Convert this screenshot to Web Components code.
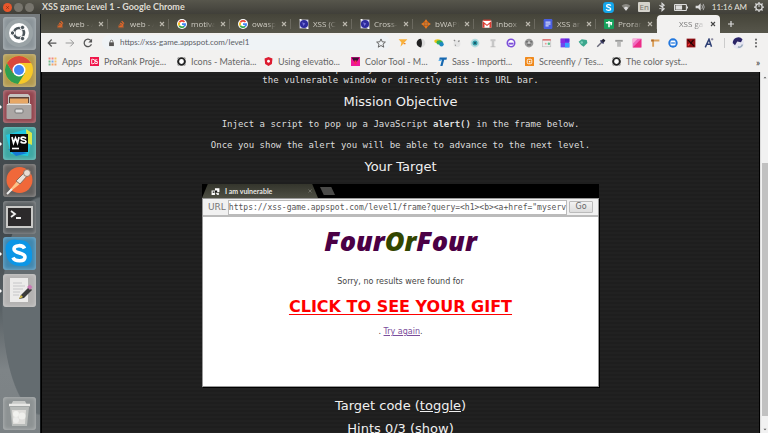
<!DOCTYPE html>
<html lang="en">
<head>
<meta charset="utf-8">
<title>XSS game: Level 1</title>
<style>
html, body { margin: 0; height: 100%; }
body { font-family: "Open Sans", sans-serif; background: #1f1f1f; overflow: hidden; }
</style>
</head>
<body>
<desk-top></desk-top>
<script>
const ICONS = {
  so: '<path d="M4 10v4h8v-4" fill="none" stroke="#8a5a3a" stroke-width="1.6"/><path d="M5 12h6M5.3 9.5l6 .9M6.5 6.5l5.3 2.6M9 3.5l3.800 4" stroke="#e0672a" stroke-width="2"/>',
  google: '<circle cx="8" cy="8" r="8" fill="#fff"/><g fill="none" stroke-width="2.800"><path d="M12 4.800A5 5 0 0 0 3.800 5.500" stroke="#ea4335"/><path d="M3.700 5.500a5 5 0 0 0 0 5" stroke="#fbbc05"/><path d="M3.700 10.500a5 5 0 0 0 7.800 1.300" stroke="#34a853"/><path d="M8 8h5a5 5 0 0 1-1.600 3.900" stroke="#4285f4"/></g>',
  owasp: '<rect x="1" y="1" width="14" height="14" fill="#dcdcf5"/><circle cx="8" cy="8" r="6.500" fill="#2d2a9c"/><path d="M5 5l5 2-3 4z" fill="#7773d8"/><path d="M1 1h3M12 15h3" stroke="#fff" stroke-width="2"/>',
  bug: '<path d="M8 1l7 7-7 7-7-7z" fill="#d9660f"/><circle cx="8" cy="8" r="3" fill="#5a4a3a"/><path d="M1 8h14M8 1v14" stroke="#f08a35" stroke-width="1.500"/>',
  mail: '<rect x="1" y="2" width="14" height="12" rx="1" fill="#fff"/><path d="M1 14V3l7 6 7-6v11h-3V8l-4 3-4-3v6z" fill="#dc3b30"/><path d="M2 2h12" stroke="#dc3b30" stroke-width="2"/>',
  doc: '<rect x="1" y="0" width="14" height="16" rx="2" fill="#4a5fe0"/><path d="M4 5h8M4 8h8M4 11h5" stroke="#fff" stroke-width="1.500"/>',
  sheet: '<rect x="0" y="0" width="16" height="16" rx="2" fill="#16a05c"/><path d="M3 6h10M8 3v10M11.500 6v4" stroke="#fff" stroke-width="2.400"/>',
  x: '<path d="M4 4l8 8M12 4l-8 8" stroke="currentColor" stroke-width="2.200"/>',
  plus: '<path d="M8 2v12M2 8h12" stroke="#ddd" stroke-width="2.400"/>',
  back: '<path d="M15 8H2.500M7.500 2.500L2 8l5.500 5.500" fill="none" stroke="#555" stroke-width="2"/>',
  fwd: '<path d="M1 8h12.500M8.500 2.500L14 8l-5.500 5.500" fill="none" stroke="#999" stroke-width="1.600"/>',
  reload: '<path d="M13.500 10A6 6 0 1 1 12.500 4" fill="none" stroke="#555" stroke-width="2"/><path d="M14.500 1v6h-6z" fill="#555"/>',
  lock: '<rect x="2.500" y="6.500" width="11" height="8.500" fill="#555"/><path d="M5 7V4.500a3 3 0 0 1 6 0V7" fill="none" stroke="#555" stroke-width="1.800"/>',
  star: '<path d="M8 1.500l2 4.600 5 .4-3.800 3.300 1.200 4.900L8 12l-4.400 2.700 1.200-4.900L1 6.500l5-.4z" fill="none" stroke="#555" stroke-width="1.400"/>',
  e1: '<path d="M1 2h14L4 14l1.500-7z" fill="#f9b13a"/><path d="M9 9h3" stroke="#f08020" stroke-width="2"/>',
  e2: '<circle cx="8" cy="8" r="7" fill="#ddd"/><path d="M8 1a7 7 0 0 0 0 14c2-4 2-10 0-14z" fill="#222"/>',
  e3: '<ellipse cx="6" cy="5" rx="5.500" ry="3" fill="#e8c414"/><ellipse cx="9" cy="7" rx="5" ry="3.500" fill="#2fb05a"/><circle cx="12" cy="10" r="3.500" fill="#1e88c0"/>',
  e4: '<circle cx="8" cy="9" r="5.500" fill="#e4e4e4"/><path d="M3 3l2 2M12 4l-2 2M5 12l1-1" stroke="#888" stroke-width="2"/>',
  e5: '<circle cx="8" cy="8" r="7" fill="#b5dcdf"/><circle cx="8" cy="8" r="4" fill="#2c98a5"/><circle cx="8" cy="8" r="1.500" fill="#145"/>',
  e6: '<path d="M4 2h8v3H4zM6 5h4v9H6z" fill="#c8c8c8"/><path d="M4 14h8" stroke="#aaa"/>',
  e7: '<circle cx="8" cy="8" r="6" fill="#fff" stroke="#7c4fd8" stroke-width="2.400"/><path d="M4 9h8" stroke="#7c4fd8" stroke-width="3"/>',
  e8: '<circle cx="8" cy="8" r="7" fill="#999"/><path d="M3 6h10M5 11h6" stroke="#666" stroke-width="2"/><circle cx="8" cy="7" r="2" fill="#ccc"/>',
  e9: '<rect x="1" y="3" width="13" height="11" fill="#eee" stroke="#bbb"/><path d="M1 3h13" stroke="#e05a5a" stroke-width="2"/><circle cx="11" cy="9" r="2" fill="#5abf8a"/><circle cx="6" cy="9" r="1.500" fill="#e99"/>',
  e10: '<rect x="1" y="1" width="14" height="14" fill="#6b49f0"/><path d="M1 1h7v7H1z" fill="#8a2be2"/><path d="M8 8h7v7H8z" fill="#36a3ff"/><path d="M8 1h7v5H8z" fill="#5b2be0"/>',
  e11: '<path d="M1 6l5-4 8 1 1 5-6 6-4-3z" fill="#3ba78d"/><circle cx="6" cy="7" r="2" fill="#7fd0bc"/>',
  e12: '<path d="M2 14L10 6" stroke="#667" stroke-width="2.400"/><path d="M8 4l4-3 3 3-3 4z" fill="#223"/><path d="M7 4l5 5" stroke="#336" stroke-width="2"/>',
  e13: '<path d="M2 3h12v3H2z" fill="#999"/><path d="M5 6h6v8H5z" fill="#bbb"/>',
  e14: '<rect x="1" y="1" width="14" height="14" fill="#f06ac0"/><path d="M15 1v14H1z" fill="#ec2d86"/><path d="M1 1h8L1 9z" fill="#f9b0d8"/>',
  e15: '<path d="M2 4h13M5 3v11" stroke="#dba05a" stroke-width="3"/><path d="M2 4h4" stroke="#b06a2a" stroke-width="3"/>',
  e16: '<circle cx="8" cy="8" r="7.500" fill="#2277dd"/><rect x="4" y="4" width="8" height="8" rx="2" fill="#fff"/><path d="M5 8h6" stroke="#2277dd" stroke-width="2"/>',
  e17: '<rect x="1" y="1" width="14" height="14" fill="#8e0d12"/><path d="M3 3l10 10M12 3l-5 6" stroke="#210404" stroke-width="2"/><path d="M3 12l3-3" stroke="#f33" stroke-width="2"/>',
  e18: '<path d="M2 15L8 2l4 12M4 10h7" fill="none" stroke="#2d3f74" stroke-width="2.400"/><path d="M11 2h4M13 0v4" stroke="#557"/>',
  avatar: '<circle cx="8" cy="8" r="8" fill="#e6e6f2"/><path d="M1 8a7.500 7.500 0 0 1 13-5l-2 4-5-1-3 5z" fill="#2a2466"/><path d="M8 13q4 2 6-3" fill="none" stroke="#9ab" stroke-width="2"/>',
  dots: '<circle cx="8" cy="2.500" r="1.700" fill="#666"/><circle cx="8" cy="8" r="1.700" fill="#666"/><circle cx="8" cy="13.500" r="1.700" fill="#666"/>',
  apps: '<g><path d="M1 1h3.500v3.500H1zM6.300 1h3.500v3.500H6.300z" fill="#f08a80"/><path d="M11.500 1H15v3.500h-3.500zM11.500 6.300H15v3.500h-3.500z" fill="#f5c26a"/><path d="M1 6.300h3.500v3.500H1zM1 11.500h3.500V15H1z" fill="#76b98a"/><path d="M6.300 6.300h3.500v3.500H6.300z" fill="#7aa7e8"/><path d="M6.300 11.500h3.500V15H6.300zM11.500 11.500H15V15h-3.500z" fill="#f0a46a"/></g>',
  pro: '<rect width="16" height="16" fill="#f0164a"/><path d="M3 4v8h2a4 4 0 0 0 0-8zM13 5H9.500v3H13v3.500H9" fill="none" stroke="#fff" stroke-width="1.600"/>',
  ring: '<circle cx="8" cy="8" r="6" fill="#fff" stroke="#222" stroke-width="3.500"/><path d="M0 3l4-3M12 0l4 3M0 13l4 3M16 13l-4 3" stroke="#999" stroke-width="1.500"/>',
  ang: '<path d="M8 0l7 2.500-1 10L8 16l-6-3.500-1-10z" fill="#dd1b2f"/><circle cx="8" cy="7.500" r="2.500" fill="#fff"/>',
  color: '<rect width="16" height="16" fill="#f0189a"/><path d="M1 1h14L10 9H6z" fill="#3a1030"/><path d="M6 6h4v7H6z" fill="#f52a55"/>',
  tee: '<path d="M3 1h13l-1 4h-4L8 16H4L7 5H2z" fill="#1668b0"/><path d="M1 6h5" stroke="#58b0f0" stroke-width="2"/>',
  screen: '<rect width="16" height="16" rx="1" fill="#f08a1d"/><rect x="4" y="4" width="8" height="8" rx="2" fill="none" stroke="#fff" stroke-width="1.600"/><rect x="7" y="7" width="2.500" height="2.500" fill="#fff"/>',
  skype: '<path d="M5 0h6a5 5 0 0 1 5 5v6a5 5 0 0 1-5 5H5a5 5 0 0 1-5-5V5a5 5 0 0 1 5-5z" fill="#14a5ea"/><path d="M11.300 5.200C10 3.300 5.200 3.400 5.200 5.700c0 2.500 6 1.700 6 4.300 0 2.700-5.400 2.700-6.600.5" fill="none" stroke="#fff" stroke-width="2"/>',
  wifi: '<path d="M1 6a10 10 0 0 1 14 0L8 14z" fill="#8b8a84"/><path d="M4.500 9.500a5 5 0 0 1 7 0L8 14z" fill="#ddd"/>',
  bt: '<path d="M4 5l7.500 6L8 14V2l3.500 3L4 11" fill="none" stroke="#ddd" stroke-width="1.700"/>',
  battery: '<rect x="1" y="2.500" width="22" height="11" rx="1" fill="none" stroke="#ddd" stroke-width="2"/><rect x="3" y="4" width="12" height="8" fill="#ddd"/><path d="M25 6v4" stroke="#ddd" stroke-width="2"/>',
  sound: '<path d="M1 6h4l4-4v12l-4-4H1z" fill="#ddd"/><path d="M11 5q2 3 0 6M13 3q3.500 5 0 10" fill="none" stroke="#bbb" stroke-width="1.400"/>',
  gear: '<circle cx="8" cy="8" r="5" fill="none" stroke="#ddd" stroke-width="2"/><path d="M8 0v3M8 13v3M0 8h3M13 8h3M2.300 2.300l2 2M11.700 11.700l2 2M2.300 13.700l2-2M11.700 4.300l2-2" stroke="#ddd" stroke-width="2"/><path d="M8 4v4" stroke="#ddd" stroke-width="1.500"/>',
  up: '<path d="M2 11l6-6 6 6z" fill="#555"/>',
  down: '<path d="M2 5l6 6 6-6z" fill="#555"/>',
  fav: '<path d="M1 6h6v8H1zM7 2h8v7H7z" fill="#fff"/><path d="M3 8h3v2H3zM7 6h4v4H7z" fill="#111"/><path d="M8 10h6v4h-3z" fill="#eee"/>'
};
const APPS = {
  Dash: ['#8b9499', '<circle cx="16" cy="16" r="14" fill="#aab1b4" opacity=".5"/><circle cx="16" cy="16" r="10" fill="#fff"/><circle cx="16" cy="16" r="5" fill="none" stroke="#4c565c" stroke-width="2.600"/><g fill="#4c565c" stroke="#fff"><circle cx="9.500" cy="16" r="2.200"/><circle cx="19.500" cy="10.500" r="2.200"/><circle cx="19.500" cy="21.500" r="2.200"/></g>'],
  Chrome: ['#b39a4e', '<circle cx="16" cy="16" r="14" fill="#f7c928"/><path d="M3.900 9A14 14 0 0 1 28.100 9H16z" fill="#d9483b"/><path d="M3.900 9A14 14 0 0 0 15 30l7-11H10z" fill="#2f9e51"/><path d="M3.900 9h12v7l-6 3z" fill="#d9483b"/><circle cx="16" cy="16" r="6.500" fill="#fff"/><circle cx="16" cy="16" r="5" fill="#4285f4"/>'],
  Files: ['#93464f', '<path d="M5 6l2-2h18l2 2v22H5z" fill="#c6c2bf"/><path d="M6 7h20v6H6z" fill="#5d4338"/><path d="M7 8.500h18v5H7z" fill="#e7a765"/><rect x="3.500" y="14" width="25" height="15" rx="1" fill="#aaa6a4"/><path d="M4 14.500h24" stroke="#e4e1df"/><rect x="12" y="19" width="8" height="4" rx="1" fill="#ddd" stroke="#777"/>'],
  WebStorm: ['#3fa8a4', '<path d="M3 8L24 2l5 10-4 17-17-2z" fill="#20c8e0"/><path d="M23 2l6 4v12l-5-2z" fill="#d8e64a"/><path d="M5 22l8 7 12-3z" fill="#1478d4"/><rect x="7" y="7" width="18" height="18" fill="#0a0a0a"/><path d="M9 10l1.500 6 2-5 2 5L16 10M23 11.500c-1.500-2-5-1.500-5 0 0 2 5 1 5 3s-4 2-5.500 0" fill="none" stroke="#fff" stroke-width="1.700"/><path d="M9 21.500h7" stroke="#fff" stroke-width="1.600"/>'],
  Postman: ['#62605f', '<circle cx="16.500" cy="16" r="13" fill="#f0683a"/><path d="M6 27l9-11 3 3-10 8z" fill="#fbc48a"/><path d="M13 17l9-9 3 3-8 9z" fill="#e9e2da" stroke="#8d6b58"/><circle cx="24" cy="9" r="3.500" fill="#e8ddd3" stroke="#8d7162"/><path d="M4 30l5-5" stroke="#eee" stroke-width="2"/>'],
  Terminal: ['#5b6063', '<rect x="3" y="5" width="27" height="22" fill="#c9c9c7"/><rect x="5" y="7" width="23" height="18" fill="#2c2a2b"/><path d="M8 10l4 3-4 3M13 17h5" fill="none" stroke="#eee" stroke-width="1.800"/>'],
  Skype: ['#4188b0', '<path d="M8 3q4-1 6 0 14-1 15 13 0 2 0 6-2 8-10 7Q4 30 3 15 1 7 8 3z" fill="#0c96e6"/><path d="M21.500 11.500C20 7.500 11 7.800 11 12c0 5 11 3 11 8 0 5-10 5-12 .5" fill="none" stroke="#fff" stroke-width="3.600"/>'],
  Editor: ['#b3b2b1', '<path d="M7 4h18v24H7z" fill="#ecebea"/><path d="M10 9h9M10 12h12M10 15h10M10 18h7M10 21h6" stroke="#c6c6c8"/><path d="M16 25l2-4 8-8 3 3-8 8z" fill="#3b3b3b"/><path d="M24 13l3-2.500 2.500 2.500-2.500 3z" fill="#c97ab3"/><path d="M16 25l2-4 2 2z" fill="#d8c04a"/>'],
  Trash: ['#8d9293', '<path d="M7 10h19l-2 19H9z" fill="#b8bbb9"/><path d="M9 13h14l-1 14H10z" fill="#deddda"/><circle cx="13" cy="17" r="3" fill="#f2f2ef"/><circle cx="19" cy="19" r="3.500" fill="#efefec"/><circle cx="13" cy="23" r="3" fill="#ececea"/><path d="M10 4h12l2 4H8z" fill="#c7c9c7"/><path d="M6 8h21" stroke="#e8e8e6" stroke-width="2.500"/>']
};
function define(tag, css, html) {
  customElements.define(tag, class extends HTMLElement {
    constructor() {
      super();
      const t = document.createElement('template');
      t.innerHTML = '<style>*{box-sizing:border-box}button{font:inherit;color:inherit;border:0;background:none;padding:0;margin:0}a{color:inherit;text-decoration:none}' + css + '</style>' + (typeof html === 'function' ? html(this) : html);
      this.attachShadow({ mode: 'open' }).append(t.content.cloneNode(true));
    }
  });
}
const attr = (el, n, d = '') => el.getAttribute(n) ?? d;

define('ui-icon', ':host{display:block;flex:none;width:var(--w,9px);height:var(--s,9px)}svg{display:block;width:100%;height:100%}',
  el => `<svg viewBox="0 0 ${attr(el, 'name') === 'battery' ? 26 : 16} 16" aria-hidden="true">${ICONS[attr(el, 'name')]}</svg>`);

define('system-bar', `
  :host{display:flex;align-items:center;height:14px;flex:none;padding:0 4px 0 3px;background:linear-gradient(#57564c,#403f39);color:#dfdbd2;font:700 9px/14px Lato,sans-serif}
  .win{display:flex;gap:2px;margin-right:8px}
  .win button{width:9px;height:9px;border-radius:50%;background:#77756d;color:#45443f}
  .win button:first-child{background:#e9572b;color:#7c2a12}
  .win ui-icon{--w:5px;--s:5px;margin:2px}
  h1{font:inherit;margin:0;flex:1;white-space:nowrap}
  .tray{display:flex;align-items:center;gap:7px;font:8px/14px Lato,sans-serif;color:#e6e4de}
  .tray ui-icon{--w:10px;--s:10px}
  .lang{font:8px/10px "Open Sans",sans-serif;background:#d5d3cc;color:#77746b;padding:0 1px;border-radius:1px}
  .tray .bat{--w:14px;--s:9px}.tray .sk{--w:11px;--s:11px}`,
  `<div class="win"><button aria-label="Close"><ui-icon name="x"></ui-icon></button><button aria-label="Minimize"></button><button aria-label="Maximize"></button></div>
  <h1>XSS game: Level 1 - Google Chrome</h1>
  <div class="tray"><ui-icon class="sk" name="skype"></ui-icon><ui-icon name="wifi"></ui-icon><span class="lang">En</span><ui-icon name="bt"></ui-icon><ui-icon class="bat" name="battery"></ui-icon><ui-icon name="sound"></ui-icon><time>11:16 AM</time><ui-icon name="gear"></ui-icon></div>`);

define('launch-item', `
  :host{display:block;position:relative}
  button{display:block;width:33px;height:33px;border-radius:3px;background:var(--bg);box-shadow:inset 0 0 4px rgba(255,255,255,.4)}
  svg{display:block;width:33px;height:33px}
  :host([open])::before{content:"";position:absolute;left:-3px;top:15px;border:2px solid transparent;border-left-color:#fff}`,
  el => { const a = APPS[attr(el, 'app')]; return `<button style="--bg:${a[0]}" aria-label="${attr(el, 'app')}"><svg viewBox="0 0 33 33">${a[1]}</svg></button>`; });

define('app-launcher', `
  :host{display:flex;flex-direction:column;justify-content:space-between;width:41px;flex:none;padding:3px;border-right:1px solid #15181a;
  background:radial-gradient(ellipse 40px 110px at 42px 292px,#646c70 98%,transparent),linear-gradient(#777c7f,#464d51 25%,#3f464a 50%,#596165 70%,#7e8487 85%,#7b8184)}
  nav{display:flex;flex-direction:column;justify-content:space-between;height:290px}`,
  `<nav aria-label="Applications"><launch-item app="Dash"></launch-item><launch-item app="Chrome" open></launch-item><launch-item app="Files" open></launch-item><launch-item app="WebStorm" open></launch-item><launch-item app="Postman"></launch-item><launch-item app="Terminal"></launch-item><launch-item app="Skype" open></launch-item><launch-item app="Editor" open></launch-item></nav><launch-item app="Trash"></launch-item>`);

define('browser-tab', `
  :host{display:flex;align-items:center;width:61px;height:18px;padding:0 3px 0 8px;color:#cfccc3;position:relative;flex:none}
  :host(:not([active]))::after{content:"";position:absolute;right:0;top:4px;height:10px;width:1px;background:#6b695f}
  :host([active]){background:#f2f1f0;color:#777;border-radius:4px 4px 0 0;width:63px}
  .t{flex:1;text-align:left;margin-left:4px;overflow:hidden;white-space:nowrap;width:24px;font-size:8px;line-height:18px;-webkit-mask:linear-gradient(90deg,#000 60%,transparent)}
  .c{display:block;margin-left:4px;color:#bbb8ae}
  :host([active]) .c{color:#444}
  .c ui-icon{--w:8px;--s:8px}
  .i{width:10px}.i ui-icon{--w:10px;--s:10px}`,
  el => `<span class="i">${attr(el, 'icon') ? `<ui-icon name="${attr(el, 'icon')}"></ui-icon>` : ''}</span><button class="t" role="tab"><slot></slot></button><button class="c" aria-label="Close tab"><ui-icon name="x"></ui-icon></button>`);

define('tab-strip', `
  :host{display:flex;align-items:center;height:19px;flex:none;padding:1px 0 0 6px;background:linear-gradient(#454439,#57564b);overflow:hidden}
  .new{margin-left:7px}.new ui-icon{--w:8px;--s:8px}`,
  `<browser-tab icon="so">web - A</browser-tab><browser-tab icon="so">web - A</browser-tab><browser-tab icon="google">motiva</browser-tab><browser-tab icon="google">owasp</browser-tab><browser-tab icon="owasp">XSS (C</browser-tab><browser-tab icon="owasp">Cross-</browser-tab><browser-tab icon="bug">bWAPP</browser-tab><browser-tab icon="mail">Inbox</browser-tab><browser-tab icon="doc">XSS ar</browser-tab><browser-tab icon="sheet">Prorar</browser-tab><browser-tab active>XSS ga</browser-tab><button class="new" aria-label="New tab"><ui-icon name="plus"></ui-icon></button>`);

const exts = Array.from({ length: 18 }, (_, i) => `<button aria-label="Extension ${i + 1}"><ui-icon name="e${i + 1}"></ui-icon></button>`).join('');
define('tool-bar', `
  :host{display:flex;align-items:center;height:19px;flex:none;background:#f2f1f0;padding:0 3px 0 2px}
  button{width:18px;height:18px;flex:none;display:grid;place-items:center}
  ui-icon{--w:10px;--s:10px}
  .field{display:flex;align-items:center;flex:1;min-width:0;height:15px;margin:0 4px 0 5px;border-radius:8px;background:#eff3f6;padding-left:6px}
  .field>ui-icon{--w:7px;--s:8px}
  input{flex:1;min-width:0;border:0;margin:0 0 0 5px;padding:0;background:none;outline:0;font:8px/15px Lato,sans-serif;color:#5b6066}
  .sep{width:1px;height:10px;background:#ccc;margin:0 4px 0 6px}
  .av ui-icon{--w:12px;--s:12px}`,
  `<button aria-label="Back"><ui-icon name="back"></ui-icon></button><button aria-label="Forward"><ui-icon name="fwd"></ui-icon></button><button aria-label="Reload"><ui-icon name="reload"></ui-icon></button>
  <div class="field"><ui-icon name="lock"></ui-icon><input aria-label="Address" value="https://xss-game.appspot.com/level1"><button aria-label="Bookmark this page"><ui-icon name="star"></ui-icon></button></div>
  ${exts}<span class="sep"></span><button class="av" aria-label="Profile"><ui-icon name="avatar"></ui-icon></button><button aria-label="Menu"><ui-icon name="dots"></ui-icon></button>`);

define('book-mark', `
  :host{display:block;width:87px;flex:none}
  :host([short]){width:42px}
  a{display:flex;align-items:center;gap:5px;white-space:nowrap;font:9px/19px Lato,sans-serif;color:#666}`,
  el => `<a href="#"><ui-icon name="${attr(el, 'icon')}"></ui-icon><span><slot></slot></span></a>`);

define('bookmark-bar', `
  :host{display:flex;height:20px;flex:none;background:#f2f1f0;padding:0 8px 0 7px;color:#555;overflow:hidden}
  button{margin-left:auto;font:700 9px/17px Lato,sans-serif}`,
  `<book-mark short icon="apps">Apps</book-mark><book-mark icon="pro">ProRank Proje...</book-mark><book-mark icon="ring">Icons - Materia...</book-mark><book-mark icon="ang">Using elevatio...</book-mark><book-mark icon="color">Color Tool - M...</book-mark><book-mark icon="tee">Sass - Importi...</book-mark><book-mark icon="screen">Screenfly / Tes...</book-mark><book-mark icon="ring">The color syst...</book-mark><button aria-label="More bookmarks">»</button>`);

define('target-frame', `
  :host{display:block;width:397px;max-width:100%;margin:0 auto;color:#444;text-align:center}
  .strip{display:flex;height:14px;background:#000}
  .tab{display:flex;align-items:center;width:116px;padding:0 5px 0 9px;gap:5px;color:#e8e8e4;background:linear-gradient(#34352c,#4d4e43);clip-path:polygon(5% 0,95% 0,100% 100%,0 100%);font:700 7px/14px Lato,sans-serif}
  .tab span{flex:1;text-align:left}.tab ui-icon{--w:9px;--s:9px}.tab .x{--w:6px;--s:6px;color:#77776e}
  .add{width:15px;height:8px;margin:3px 0 0 2px;background:#4a4a48;clip-path:polygon(0 0,75% 0,100% 100%,25% 100%)}
  .win{background:#fff;border:1px solid #999;box-shadow:1px 1px 0 #000}
  form{display:flex;align-items:center;height:18px;background:#f1f1f1;border-bottom:2px solid #bbb;padding:0 5px;margin:0;font:9px/16px "DejaVu Sans",sans-serif;color:#777}
  input{flex:1;min-width:0;height:15px;margin:0 2px 0 2px;padding:0;border:1px solid #bbb;background:#fff;font:8px/13px "DejaVu Sans Mono",monospace;color:#555}
  form button{width:24px;height:12px;background:linear-gradient(#f2f2f2,#ddd);border:1px solid #bbb;border-radius:1px;font:8px/10px "DejaVu Sans",sans-serif;color:#666}
  .body{height:169px;font:8px/12px "DejaVu Sans",sans-serif}
  .logo{font:italic 800 27px/32px "Open Sans",sans-serif;color:#4b0045;padding-top:8px}
  .logo i{color:#324600}
  p{margin:19px 0 0}
  h2{margin:8px 0 0;font:700 16px/22px "DejaVu Sans",sans-serif;color:#f00}
  h2 a{text-decoration:underline;text-decoration-thickness:1px;text-underline-offset:2px}
  .again{margin-top:8px}.again a{color:#7b4d9b;text-decoration:underline}`,
  `<div class="strip"><div class="tab"><ui-icon name="fav"></ui-icon><span>I am vulnerable</span><ui-icon class="x" name="x"></ui-icon></div><div class="add"></div></div>
  <div class="win"><form onsubmit="return false"><label for="u">URL</label><input id="u" value='https://xss-game.appspot.com/level1/frame?query=&lt;h1>&lt;b>&lt;a+href="myserver.com">'><button>Go</button></form>
  <div class="body"><div class="logo">Four<i>Or</i>Four</div><p>Sorry, no results were found for</p><h2><a href="#">CLICK TO SEE YOUR GIFT</a></h2><p class="again">. <a href="#">Try again</a>.</p></div></div>`);

define('scroll-rail', `
  :host{display:grid;grid-template-rows:10px 81fr 252fr 9fr 8px;width:8px;flex:none;background:#f1f1f1;border-left:1px solid #ddd;justify-items:center}
  i{grid-row:3;width:6px;background:#c1c1c1}ui-icon{--w:4px;--s:5px;align-self:center}.d{grid-row:5}`,
  `<ui-icon name="up"></ui-icon><i></i><ui-icon class="d" name="down"></ui-icon>`);

define('game-page', `
  :host{display:block;flex:1;min-width:0;overflow:hidden;text-align:center;color:#ddd;border:solid #000;border-width:0 1px;
  background:repeating-linear-gradient(#212121 0 2px,#1e1e1e 2px 4px);font:9px/11px "DejaVu Sans Mono",monospace}
  article{margin-top:-8px}
  p{margin:0 auto;max-width:400px}
  p+p{margin-top:10px}
  h2{font:500 13px/17px "DejaVu Sans",sans-serif;margin:7px 0 9px;color:#f0f0f0}
  h2.end{margin:10px 0 6px}h2 a{text-decoration:underline}
  h2.end+h2.end{margin-top:0}`,
  `<article><p>make it execute JavaScript of your choosing. You can take actions inside the vulnerable window or directly edit its URL bar.</p>
  <h2>Mission Objective</h2><p>Inject a script to pop up a JavaScript <b>alert()</b> in the frame below.</p><p>Once you show the alert you will be able to advance to the next level.</p>
  <h2>Your Target</h2><target-frame></target-frame>
  <h2 class="end">Target code (<a href="#">toggle</a>)</h2><h2 class="end">Hints 0/3 (<a href="#">show</a>)</h2></article>`);

define('desk-top', `
  :host{display:flex;flex-direction:column;height:100vh}
  .row,.page{display:flex;flex:1;min-height:0}
  .browser{display:flex;flex-direction:column;flex:1;min-width:0}`,
  `<system-bar></system-bar><div class="row"><app-launcher></app-launcher><div class="browser"><tab-strip></tab-strip><tool-bar></tool-bar><bookmark-bar></bookmark-bar><div class="page"><game-page></game-page><scroll-rail></scroll-rail></div></div></div>`);
</script>
</body>
</html>
